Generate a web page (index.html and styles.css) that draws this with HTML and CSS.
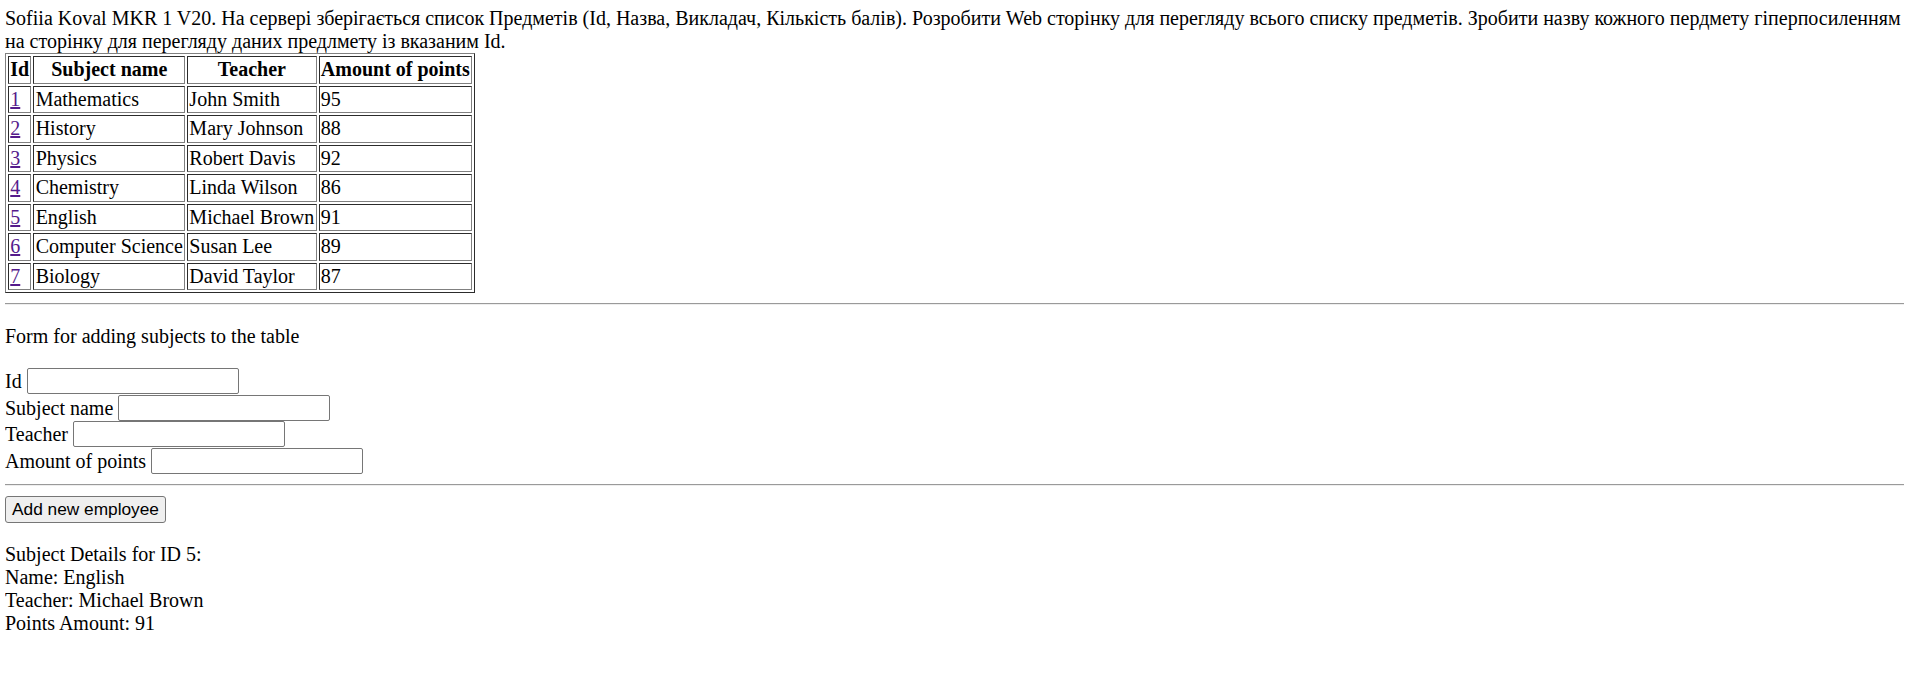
FILE: index.html
```html
<!DOCTYPE html>
<html>
<head>
<meta charset="utf-8">
<link rel="stylesheet" href="styles.css">
</head>
<body>
<div class="intro">Sofiia Koval MKR 1 V20. На сервері зберігається список Предметів (Id, Назва, Викладач, Кількість балів). Розробити Web сторінку для перегляду всього списку предметів. Зробити назву кожного пердмету гіперпосиленням<br>на сторінку для перегляду даних предлмету із вказаним Id.</div>
<table class="subjects">
<tr><th>Id</th><th>Subject name</th><th>Teacher</th><th>Amount of points</th></tr>
<tr><td><a href="#">1</a></td><td>Mathematics</td><td>John Smith</td><td>95</td></tr>
<tr><td><a href="#">2</a></td><td>History</td><td>Mary Johnson</td><td>88</td></tr>
<tr><td><a href="#">3</a></td><td>Physics</td><td>Robert Davis</td><td>92</td></tr>
<tr><td><a href="#">4</a></td><td>Chemistry</td><td>Linda Wilson</td><td>86</td></tr>
<tr><td><a href="#">5</a></td><td>English</td><td>Michael Brown</td><td>91</td></tr>
<tr><td><a href="#">6</a></td><td>Computer Science</td><td>Susan Lee</td><td>89</td></tr>
<tr><td><a href="#">7</a></td><td>Biology</td><td>David Taylor</td><td>87</td></tr>
</table>
<hr class="rule">
<p class="form-title">Form for adding subjects to the table</p>
<form class="add-form">
<div class="field">Id <input type="text" class="text-input"></div>
<div class="field">Subject name <input type="text" class="text-input"></div>
<div class="field">Teacher <input type="text" class="text-input"></div>
<div class="field">Amount of points <input type="text" class="text-input"></div>
<hr class="rule">
<button type="button" class="add-btn">Add new employee</button>
</form>
<div class="details">
<div>Subject Details for ID 5:</div>
<div>Name: English</div>
<div>Teacher: Michael Brown</div>
<div>Points Amount: 91</div>
</div>
</body>
</html>
```
FILE: styles.css
```css
html, body {
  background: #fff;
}
body {
  margin: 7px 11px 0 5px;
  font-family: "Liberation Serif", "Times New Roman", serif;
  font-size: 20px;
  line-height: 23px;
  color: #000;
}
.intro {
  margin: 0;
}
.subjects {
  border: 1px outset #808080;
  border-spacing: 2.5px;
  font-size: 20px;
}
.subjects th,
.subjects td {
  border: 1px inset #808080;
  padding: 1.25px;
  line-height: 23px;
}
.subjects th {
  font-weight: bold;
  text-align: center;
}
.subjects td {
  text-align: left;
}
.subjects a {
  color: #551a8b;
  text-decoration: underline;
}
.rule {
  margin: 10px 0;
  border: 0;
  border-top: 1px solid #9a9a9a;
  border-bottom: 1px solid #eeeeee;
  height: 0;
}
.form-title {
  margin: 20px 0;
}
.add-form {
  margin: 0 0 20px 0;
}
.field {
  height: 26.5px;
  line-height: 26px;
}
.text-input {
  box-sizing: border-box;
  width: 212px;
  height: 26px;
  border: 1px solid #767676;
  border-radius: 2px;
  padding: 1px 2px;
  font-family: "Liberation Sans", Arial, sans-serif;
  font-size: 16.7px;
  vertical-align: bottom;
  background: #fff;
}
.add-btn {
  display: block;
  box-sizing: border-box;
  width: 161px;
  height: 27px;
  padding: 0;
  font-family: "Liberation Sans", Arial, sans-serif;
  font-size: 17.3px;
  color: #000;
  background: #efefef;
  border: 1px solid #767676;
  border-radius: 3px;
}
.details {
  margin-top: 0;
}
```
